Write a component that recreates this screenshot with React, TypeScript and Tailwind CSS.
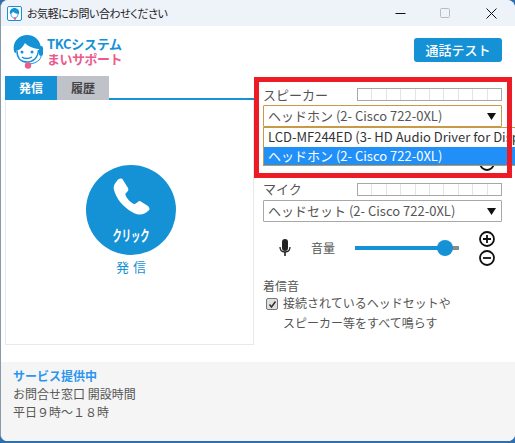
import React from "react";

const font = { fontFamily: '"Noto Sans CJK JP", "Noto Sans", sans-serif' };

function Meter() {
  return (
    <div className="flex w-[145px] h-[13px] border border-[#a8a8a8] bg-white">
      {Array.from({ length: 10 }).map((_, i) => (
        <div key={i} className="flex-1 border-r border-[#e4e4e4] last:border-r-0" />
      ))}
    </div>
  );
}

function Select({ text, active }: { text: string; active?: boolean }) {
  return (
    <div
      className={`mt-[5px] h-[22px] w-[239px] flex items-center justify-between pl-[4px] pr-[5px] text-[13px] leading-[18px] text-[#555] bg-white border rounded-[1px] ${
        active ? "border-[#c89a48]" : "border-[#a8a8a8]"
      }`}
    >
      <span className="whitespace-nowrap">{text}</span>
      <svg width="9" height="7" viewBox="0 0 9 7"><path d="M0 0h9L4.5 7z" fill="#111" /></svg>
    </div>
  );
}

function PlusMinus() {
  return (
    <div className="flex flex-col gap-[3px]">
      <svg width="16" height="16" viewBox="0 0 16 16" fill="none" stroke="#111" strokeWidth="1.8">
        <circle cx="8" cy="8" r="7" /><path d="M4 8h8M8 4v8" />
      </svg>
      <svg width="16" height="16" viewBox="0 0 16 16" fill="none" stroke="#111" strokeWidth="1.8">
        <circle cx="8" cy="8" r="7" /><path d="M4 8h8" />
      </svg>
    </div>
  );
}

function Volume({ label }: { label?: string }) {
  return (
    <div className="mt-[7px] h-[38px] flex items-center">
      <svg className="ml-[16px]" width="12" height="18" viewBox="0 0 12 18">
        <rect x="3" y="0" width="6" height="12" rx="3" fill="#222" />
        <path d="M1 8c0 3 2 5 5 5s5-2 5-5" fill="none" stroke="#222" strokeWidth="1.3" />
        <path d="M6 13v4" stroke="#222" strokeWidth="1.6" />
      </svg>
      <span className="ml-[20px] w-[24px] text-[12px] leading-[18px] text-[#555] whitespace-nowrap">{label}</span>
      <div className="ml-[20px] relative w-[104px] h-[4px] bg-[#8a8a8a]">
        <div className="h-full w-[90px] bg-[#1591d6]" />
        <div className="absolute left-[82px] top-[-6px] w-[16px] h-[16px] rounded-full bg-[#1591d6]" />
      </div>
      <div className="ml-[20px]"><PlusMinus /></div>
    </div>
  );
}

export default function App() {
  return (
    <div className="relative w-[515px] h-[443px] overflow-hidden bg-[#2f6fae]" style={font}>
      <div className="w-[515px] h-[441px] bg-white rounded-t-[8px] rounded-b-[7px] border-l border-[#8699ad] flex flex-col overflow-hidden">
        {/* title bar */}
        <div className="h-[26px] shrink-0 bg-[#eef2f9] flex items-center">
          <svg className="ml-[6px]" width="15" height="15" viewBox="0 0 15 15">
            <rect x="0.5" y="0.5" width="14" height="14" rx="1.5" fill="#fff" stroke="#1591d6" />
            <path d="M3 8C2 4 5 2 7.500 2S13 4 12 8C9 8 7 7 6 5.500 5.500 7 4.500 8 3 8Z" fill="#1591d6" />
            <path d="M4 8c0 3 2 4 3.500 4S11 11 11 8" fill="none" stroke="#1591d6" strokeWidth="0.8" />
            <circle cx="8" cy="12.500" r="1.200" fill="#e8588f" />
          </svg>
          <span className="ml-[5px] text-[11px] leading-[16px] text-[#222] tracking-[-0.45px] [font-feature-settings:'palt']">お気軽にお問い合わせください</span>
          <div className="ml-auto flex items-center">
            <svg width="11" height="11" viewBox="0 0 11 11"><path d="M0.500 5.500h10" stroke="#111" /></svg>
            <svg className="ml-[34px]" width="11" height="11" viewBox="0 0 11 11"><rect x="0.500" y="0.500" width="9" height="9" rx="1" fill="none" stroke="#bbb" /></svg>
            <svg className="ml-[35px] mr-[18px]" width="11" height="11" viewBox="0 0 11 11"><path d="M0.500 0.500l10 10M10.500 0.500l-10 10" stroke="#111" /></svg>
          </div>
        </div>

        <div className="flex-1 flex min-h-0">
          {/* left column */}
          <div className="w-[253px] shrink-0 pl-[4px] flex flex-col">
            <div className="h-[50px] flex items-center pl-[8px]">
              <svg className="mt-[2px]" width="31" height="34" viewBox="0 0 31 34">
                <path d="M1 16C-1 7 6 0 14 0C22 0 28 6 28 14C22 14 16 12 12 8C10 12 7 15 3 16L3 18C2 18 1 17 1 16Z" fill="#1591d6" />
                <path d="M4 16C4 23 8 27 14 27C20 27 25 23 25.500 15" fill="none" stroke="#1591d6" strokeWidth="1.500" />
                <circle cx="9" cy="17" r="1.500" fill="#1591d6" />
                <circle cx="19" cy="17" r="1.500" fill="#1591d6" />
                <path d="M9 22C11 24 16 24 19 22" fill="none" stroke="#1591d6" strokeWidth="1.400" />
                <rect x="26" y="11" width="4" height="10" rx="2" fill="#1591d6" />
                <path d="M28 21C28 25 23 28 17 29" fill="none" stroke="#1591d6" strokeWidth="1" />
                <circle cx="15" cy="30.500" r="3.200" fill="#ea5b8e" />
              </svg>
              <div className="ml-[3px] flex flex-col font-bold">
                <span className="text-[13px] leading-[14px] text-[#1591d6] whitespace-nowrap tracking-[-0.3px]">TKCシステム</span>
                <span className="text-[13px] leading-[15px] text-[#ea5b8e] whitespace-nowrap tracking-[-0.5px]">まいサポート</span>
              </div>
            </div>
            <div className="flex h-[24px] shrink-0 items-stretch">
              <div className="w-[52px] bg-[#1591d6] text-white text-[12px] font-bold flex items-center justify-center">発信</div>
              <div className="w-[52px] bg-[#c0c2ca] text-[#444] text-[12px] font-bold flex items-center justify-center">履歴</div>
              <div className="flex-1 self-end h-[2px] bg-[#1591d6]" />
            </div>
            <div className="h-[245px] shrink-0 border border-t-0 border-[#e8e8e8] flex flex-col items-center">
              <div className="ml-[3px] mt-[65px] w-[90px] h-[90px] rounded-full bg-[#1591d6] flex flex-col items-center">
                <svg className="mt-[13px] ml-[2px]" width="38" height="38" viewBox="0 0 38 38">
                  <path d="M4 3C6 0 9 0 10 2L15 10C16 12 15 13 13 15C12 16 12 17 14 20C17 24 20 26 22 26C24 25 25 23 27 23L35 28C37 30 37 32 35 33C31 37 26 38 19 34C10 29 3 20 1 12C0 8 2 5 4 3Z" fill="#fff" />
                </svg>
                <span className="mt-[11px] text-[15px] leading-[16px] font-bold text-white whitespace-nowrap scale-x-[0.62]">クリック</span>
              </div>
              <span className="ml-[7px] mt-[3px] text-[13px] leading-[18px] tracking-[4px] text-[#1591d6]">発信</span>
            </div>
          </div>

          {/* right column */}
          <div className="flex-1 pl-[9px] pr-[13px] relative">
            <div className="h-[50px] flex justify-end items-start pt-[12px]">
              <div className="w-[88px] h-[24px] rounded-[3px] bg-[#1591d6] text-white text-[13px] leading-[18px] font-medium flex items-center justify-center">通話テスト</div>
            </div>
            <div className="h-[24px] flex items-start justify-between pt-[10px]">
              <span className="text-[13px] leading-[18px] text-[#555]">スピーカー</span>
              <div className="mt-[2px]"><Meter /></div>
            </div>
            <Select text="ヘッドホン (2- Cisco 722-0XL)" active />
            <Volume />
            <div className="mt-[8px] flex items-start justify-between h-[15px]">
              <span className="text-[13px] leading-[18px] text-[#555]">マイク</span>
              <div className="mt-[3px]"><Meter /></div>
            </div>
            <Select text="ヘッドセット (2- Cisco 722-0XL)" />
            <Volume label="音量" />
            <div className="mt-[10px] text-[12px] leading-[18px] text-[#555]">着信音</div>
            <div className="-mt-[2px] flex items-start text-[12px] leading-[20px] text-[#555]">
              <div className="ml-[3px] mt-[5px] w-[12px] h-[12px] rounded-[2px] border border-[#777] bg-[#e0e0e0] flex items-center justify-center shrink-0">
                <svg width="9" height="9" viewBox="0 0 9 9"><path d="M1.500 4.500L3.500 7L7.500 1.500" fill="none" stroke="#333" strokeWidth="1.500" /></svg>
              </div>
              <span className="ml-[5px]">接続されているヘッドセットや<br />スピーカー等をすべて鳴らす</span>
            </div>
          </div>
        </div>

        {/* footer */}
        <div className="h-[79px] shrink-0 bg-[#f5f5f5] pl-[12px] pt-[5px] text-[12px] leading-[18px] text-[#555]">
          <div className="font-bold text-[#2b95f0]">サービス提供中</div>
          <div>お問合せ窓口 開設時間</div>
          <div>平日９時～１８時</div>
        </div>
      </div>

      {/* open dropdown list */}
      <div className="absolute left-[263px] top-[127px] w-[255px] h-[39px] bg-white border border-[#c89a48] text-[13px] leading-[18px] overflow-hidden whitespace-nowrap text-[#333]">
        <div className="pl-[4px] h-[19px]">LCD-MF244ED (3- HD Audio Driver for Display Audio)</div>
        <div className="pl-[4px] h-[19px] bg-[#2090f8] text-white">ヘッドホン (2- Cisco 722-0XL)</div>
      </div>
      {/* red annotation */}
      <div className="absolute left-[254px] top-[77px] w-[258px] h-[101px] border-[5px] border-[#ed1c24]" />
    </div>
  );
}
